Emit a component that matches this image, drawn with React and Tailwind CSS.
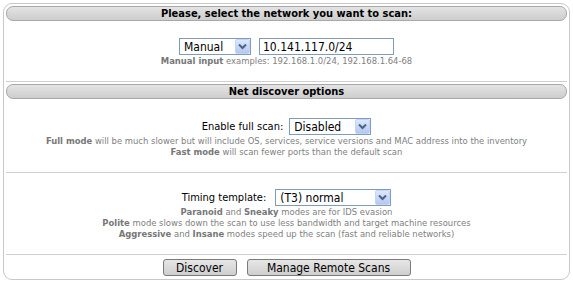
import React from "react";

const font = { fontFamily: '"DejaVu Sans Condensed", "DejaVu Sans", sans-serif' };

function Select({ value, width }) {
  return (
    <div className={`flex items-center h-[17px] border border-[#7f9db9] bg-white ${width}`}>
      <span className="flex-1 pl-[4px] text-[12px] leading-none text-black">{value}</span>
      <span className="w-[15px] h-[15px] flex items-center justify-center bg-gradient-to-b from-[#dce8fb] to-[#b4c8f0] border border-[#c3d3fd] rounded-[2px]">
        <svg width="9" height="7" viewBox="0 0 9 7">
          <path d="M1 1.5 L4.5 5 L8 1.5" stroke="#4d6185" strokeWidth="2" fill="none" />
        </svg>
      </span>
    </div>
  );
}

function Header({ children }) {
  return (
    <div className="h-[15px] rounded-[7px] border border-[#a8a8a8] bg-gradient-to-b from-[#e4e4e4] to-[#cdcdcd] flex items-center justify-center text-[11px] font-bold text-black leading-none">
      {children}
    </div>
  );
}

function Btn({ children, w }) {
  return (
    <div className={`h-[17px] ${w} flex items-center justify-center text-[12px] leading-none text-black bg-gradient-to-b from-[#e6e6e6] to-[#cfcfcf] border border-[#7a7a7a] rounded-[3px]`}>
      {children}
    </div>
  );
}

export default function App() {
  return (
    <div className="w-[573px] h-[283px] bg-white p-[3px]" style={font}>
      <div className="h-[277px] border border-[#c8c8c8] rounded-[9px] px-[2px] pt-[2px] flex flex-col">
        <Header>Please, select the network you want to scan:</Header>
        <div className="mt-[17px] flex justify-center items-center gap-[8px]">
          <Select value="Manual" width="w-[72px]" />
          <div className="h-[17px] w-[135px] border border-[#7f9db9] bg-white flex items-center pl-[3px] text-[12px] leading-none text-black">10.141.117.0/24</div>
        </div>
        <div className="text-center text-[9.4px] leading-[11px] text-[#808080]">
          <b className="text-[#777]">Manual input</b> examples: 192.168.1.0/24, 192.168.1.64-68
        </div>
        <div className="mt-[15px] h-px bg-[#cfcfcf]" />
        <div className="mt-[2px]">
          <Header>Net discover options</Header>
        </div>
        <div className="mt-[19px] flex justify-center items-center gap-[6px]">
          <span className="text-[11px] text-black leading-none">Enable full scan:</span>
          <Select value="Disabled" width="w-[82px]" />
        </div>
        <div className="text-center text-[9.4px] leading-[11px] text-[#808080]">
          <div><b className="text-[#777]">Full mode</b> will be much slower but will include OS, services, service versions and MAC address into the inventory</div>
          <div><b className="text-[#777]">Fast mode</b> will scan fewer ports than the default scan</div>
        </div>
        <div className="mt-[15px] h-px bg-[#cfcfcf]" />
        <div className="mt-[16px] flex justify-center items-center gap-[9px]">
          <span className="text-[11px] text-black leading-none">Timing template:</span>
          <Select value="(T3) normal" width="w-[116px]" />
        </div>
        <div className="text-center text-[9.4px] leading-[11px] text-[#808080]">
          <div><b className="text-[#777]">Paranoid</b> and <b className="text-[#777]">Sneaky</b> modes are for IDS evasion</div>
          <div><b className="text-[#777]">Polite</b> mode slows down the scan to use less bandwidth and target machine resources</div>
          <div><b className="text-[#777]">Aggressive</b> and <b className="text-[#777]">Insane</b> modes speed up the scan (fast and reliable networks)</div>
        </div>
        <div className="mt-[15px] h-px bg-[#cfcfcf]" />
        <div className="mt-[4px] flex justify-center gap-[10px]">
          <Btn w="w-[74px]">Discover</Btn>
          <Btn w="w-[164px]">Manage Remote Scans</Btn>
        </div>
      </div>
    </div>
  );
}
